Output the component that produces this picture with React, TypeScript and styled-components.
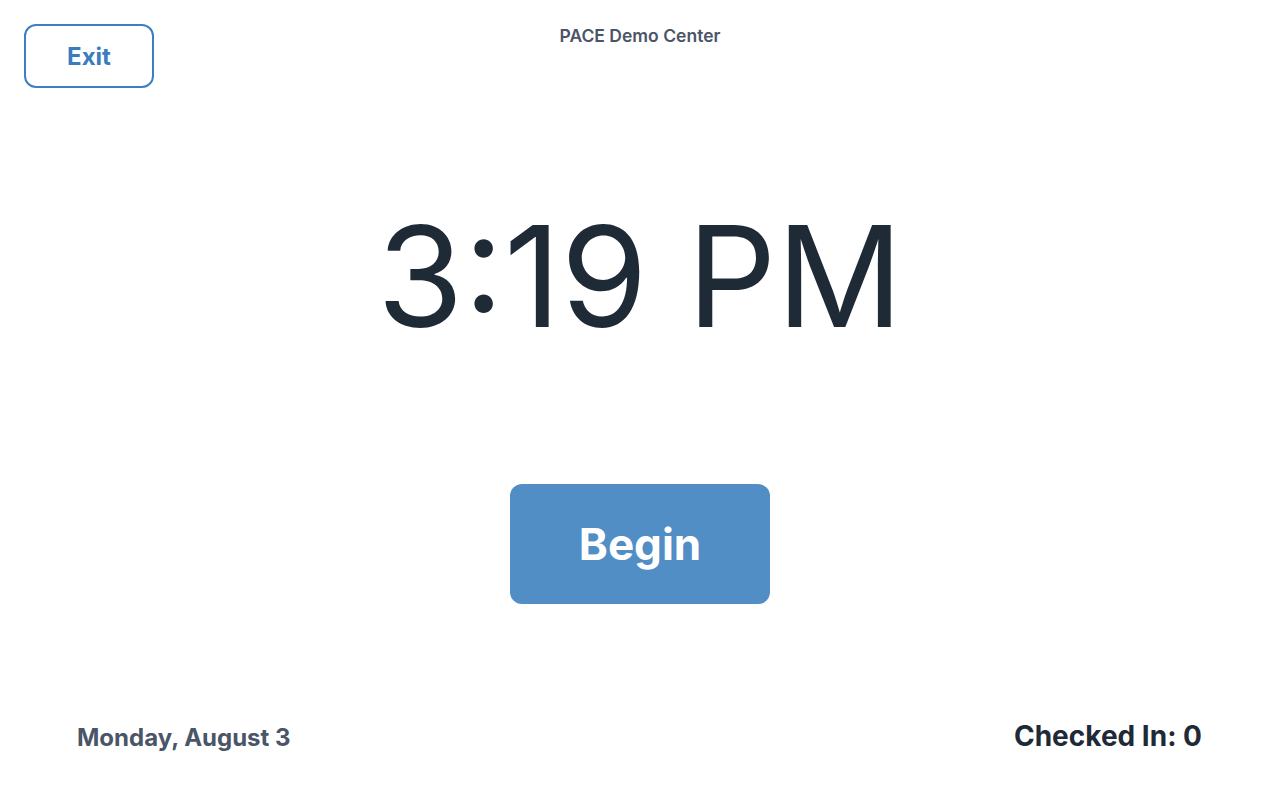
import styled, { createGlobalStyle } from "styled-components";

const GlobalStyle = createGlobalStyle`
  html, body {
    margin: 0;
    padding: 0;
    background: #ffffff;
  }
  body {
    font-family: Inter, "Noto Sans", "Liberation Sans", sans-serif;
  }
`;

export default function App() {
  return (
    <>
      <GlobalStyle />
      <Page>
        <Header>
          <HeaderSide>
            <ExitButton>Exit</ExitButton>
          </HeaderSide>
          <CenterName>PACE Demo Center</CenterName>
          <HeaderSide />
        </Header>

        <Main>
          <Clock>3:19 PM</Clock>
          <BeginButton>Begin</BeginButton>
        </Main>

        <Footer>
          <DateText>Monday, August 3</DateText>
          <CheckedIn>Checked In: 0</CheckedIn>
        </Footer>
      </Page>
    </>
  );
}

const Page = styled.div`
  height: 800px;
  display: flex;
  flex-direction: column;
  box-sizing: border-box;
`;

const Header = styled.div`
  display: grid;
  grid-template-columns: 1fr auto 1fr;
  align-items: start;
  padding: 24px 24px 0;
`;

const HeaderSide = styled.div`
  display: flex;
`;

const ExitButton = styled.button`
  width: 130px;
  height: 64px;
  box-sizing: border-box;
  border: 2px solid #3d7fc1;
  border-radius: 12px;
  background: #ffffff;
  color: #3a7dbf;
  font-family: Inter, "Noto Sans", sans-serif;
  font-size: 24px;
  font-weight: 700;
  cursor: pointer;
`;

const CenterName = styled.div`
  margin-top: 1px;
  font-size: 17.5px;
  font-weight: 600;
  color: #4a5568;
`;

const Main = styled.div`
  flex: 1;
  display: flex;
  flex-direction: column;
  align-items: center;
`;

const Clock = styled.div`
  margin-top: 98px;
  font-size: 140px;
  font-weight: 400;
  line-height: 180px;
  color: #1e2a36;
`;

const BeginButton = styled.button`
  margin-top: 118px;
  width: 260px;
  height: 120px;
  border: none;
  border-radius: 12px;
  background: #518ec6;
  color: #ffffff;
  font-family: Inter, "Noto Sans", sans-serif;
  font-size: 44px;
  font-weight: 700;
  cursor: pointer;
`;

const Footer = styled.div`
  display: flex;
  justify-content: space-between;
  align-items: baseline;
  padding: 0 78px 47px 77px;
`;

const DateText = styled.div`
  font-size: 24px;
  font-weight: 700;
  color: #4a5568;
`;

const CheckedIn = styled.div`
  font-size: 28px;
  font-weight: 700;
  color: #1e2a36;
`;
